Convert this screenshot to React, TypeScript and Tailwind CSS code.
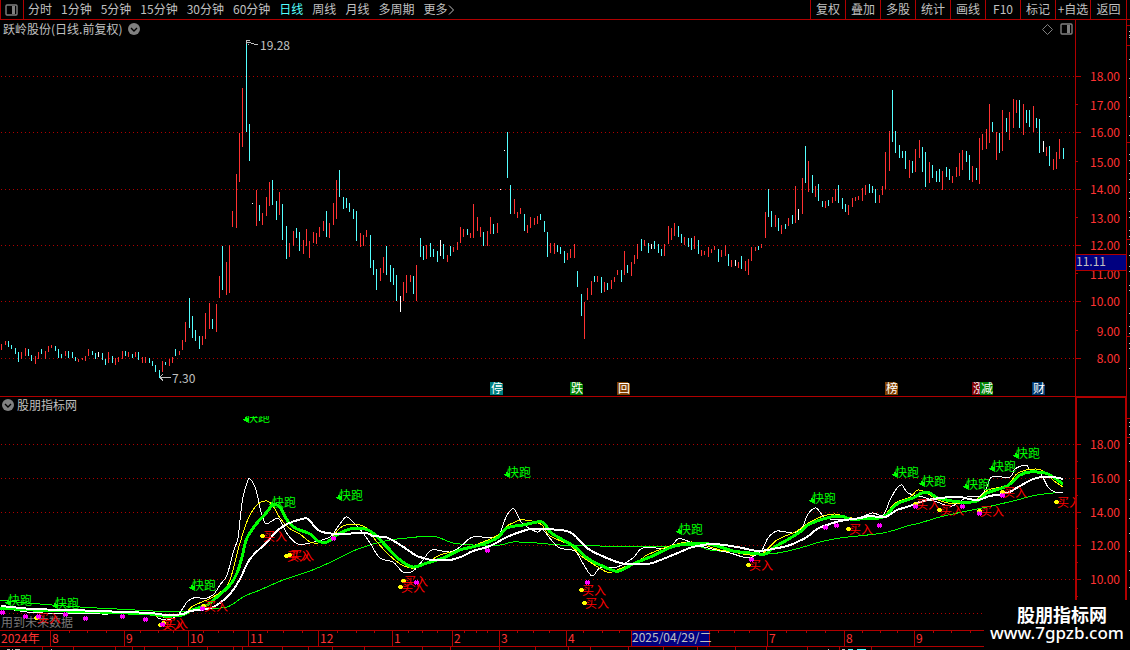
import React from "react";
import clsx from "clsx";

type Bar = [x: number, high: number, low: number, kind: "r" | "c" | "w"];

const RED = "#b00000";
const BAR_COLORS = { r: "#ff3232", c: "#54ffff", w: "#ffffff" };

const bars: Bar[] = [
  [1, 344, 350, "r"], [5, 341, 345, "r"], [8, 341, 347, "c"], [11, 345, 349, "c"], [15, 348, 354, "c"],
  [18, 352, 362, "c"], [21, 352, 359, "r"], [25, 348, 356, "r"], [28, 349, 356, "c"], [31, 355, 361, "c"],
  [35, 356, 364, "r"], [38, 352, 359, "r"], [41, 349, 354, "c"], [45, 351, 359, "r"], [48, 346, 352, "r"],
  [51, 345, 348, "r"], [55, 346, 351, "c"], [58, 349, 358, "c"], [61, 354, 358, "c"], [65, 351, 356, "r"],
  [68, 351, 358, "c"], [72, 352, 358, "c"], [75, 357, 361, "c"], [78, 359, 362, "r"], [82, 358, 360, "r"],
  [85, 356, 361, "r"], [88, 349, 356, "r"], [92, 351, 355, "c"], [95, 353, 359, "c"], [98, 352, 357, "w"],
  [102, 353, 360, "c"], [105, 359, 365, "c"], [108, 352, 363, "r"], [112, 356, 363, "c"], [115, 358, 365, "r"],
  [118, 357, 362, "r"], [122, 351, 359, "r"], [125, 351, 356, "c"], [128, 352, 357, "r"], [132, 354, 358, "c"],
  [135, 352, 357, "r"], [138, 352, 360, "c"], [142, 357, 363, "r"], [145, 357, 363, "r"], [149, 358, 363, "c"],
  [152, 361, 366, "c"], [155, 365, 372, "c"], [159, 370, 378, "c"], [162, 361, 372, "r"], [165, 362, 365, "c"],
  [169, 359, 366, "r"], [172, 357, 363, "r"], [175, 349, 356, "c"], [179, 351, 355, "r"], [182, 340, 350, "r"],
  [185, 322, 342, "r"], [189, 298, 328, "c"], [192, 316, 338, "c"], [195, 330, 341, "c"], [199, 336, 349, "c"],
  [202, 336, 345, "r"], [205, 313, 339, "r"], [209, 303, 329, "r"], [212, 319, 329, "c"], [216, 304, 332, "r"],
  [219, 276, 298, "r"], [222, 246, 290, "c"], [226, 262, 295, "r"], [229, 245, 293, "r"], [232, 211, 227, "r"],
  [236, 174, 228, "r"], [239, 133, 182, "r"], [242, 88, 147, "r"], [246, 40, 132, "c"], [249, 124, 161, "c"],
  [252, 203, 204, "w"], [256, 190, 226, "r"], [259, 205, 221, "c"], [262, 213, 225, "r"], [266, 197, 216, "r"],
  [269, 182, 206, "r"], [272, 180, 205, "c"], [276, 201, 220, "c"], [279, 192, 215, "r"], [282, 204, 240, "c"],
  [286, 226, 259, "c"], [289, 243, 257, "r"], [293, 231, 246, "r"], [296, 228, 238, "c"], [299, 232, 251, "c"],
  [303, 240, 254, "r"], [306, 229, 246, "r"], [309, 241, 258, "r"], [313, 232, 243, "r"], [316, 233, 244, "r"],
  [319, 227, 237, "r"], [323, 221, 231, "r"], [326, 211, 237, "c"], [329, 223, 238, "r"], [333, 203, 225, "r"],
  [336, 180, 219, "r"], [339, 170, 197, "c"], [343, 197, 209, "c"], [346, 198, 208, "c"], [349, 203, 212, "c"],
  [353, 209, 219, "c"], [356, 211, 241, "c"], [360, 233, 247, "r"], [363, 235, 246, "r"], [366, 230, 237, "r"],
  [370, 235, 268, "c"], [373, 260, 275, "c"], [376, 269, 290, "c"], [380, 268, 281, "r"], [383, 257, 273, "r"],
  [386, 246, 275, "c"], [390, 265, 282, "c"], [393, 268, 285, "c"], [396, 275, 301, "c"], [400, 296, 312, "w"],
  [403, 282, 301, "r"], [406, 275, 293, "r"], [410, 275, 282, "r"], [413, 276, 294, "c"], [416, 265, 301, "r"],
  [420, 238, 257, "c"], [423, 246, 260, "c"], [426, 245, 259, "r"], [430, 243, 257, "c"], [433, 249, 257, "c"],
  [437, 251, 262, "c"], [440, 240, 256, "w"], [443, 244, 259, "c"], [447, 255, 262, "r"], [450, 246, 256, "c"],
  [453, 247, 252, "r"], [457, 242, 250, "r"], [460, 227, 243, "r"], [463, 229, 237, "r"], [467, 229, 235, "c"],
  [470, 233, 238, "r"], [473, 204, 238, "r"], [477, 217, 231, "r"], [480, 227, 237, "r"], [483, 232, 246, "c"],
  [487, 231, 246, "r"], [490, 217, 234, "r"], [493, 224, 234, "c"], [497, 223, 233, "r"], [500, 189, 190, "w"],
  [504, 150, 151, "w"], [507, 132, 178, "c"], [510, 185, 214, "c"], [514, 199, 214, "r"], [517, 212, 218, "r"],
  [520, 208, 214, "r"], [524, 214, 231, "c"], [527, 225, 233, "r"], [530, 217, 228, "r"], [534, 218, 225, "r"],
  [537, 216, 224, "r"], [540, 214, 220, "c"], [544, 221, 232, "c"], [547, 232, 257, "c"], [550, 243, 253, "r"],
  [554, 243, 254, "r"], [557, 245, 252, "c"], [560, 247, 254, "c"], [564, 251, 263, "c"], [567, 253, 260, "r"],
  [570, 249, 258, "r"], [574, 244, 258, "r"], [577, 271, 287, "c"], [581, 294, 316, "c"], [584, 302, 339, "r"],
  [587, 288, 300, "r"], [591, 281, 295, "r"], [594, 276, 282, "c"], [597, 276, 282, "r"], [601, 277, 293, "c"],
  [604, 282, 292, "r"], [607, 283, 290, "c"], [611, 280, 289, "r"], [614, 277, 282, "r"], [617, 270, 275, "r"],
  [621, 270, 282, "c"], [624, 251, 275, "r"], [627, 265, 273, "c"], [631, 262, 276, "r"], [634, 255, 264, "r"],
  [637, 244, 259, "r"], [641, 239, 251, "c"], [644, 240, 246, "r"], [648, 243, 253, "c"], [651, 244, 249, "w"],
  [654, 241, 249, "c"], [658, 244, 253, "c"], [661, 249, 256, "c"], [664, 244, 256, "r"], [668, 226, 244, "r"],
  [671, 228, 240, "r"], [674, 223, 236, "r"], [678, 226, 237, "c"], [681, 234, 243, "c"], [684, 237, 245, "r"],
  [688, 238, 247, "c"], [691, 238, 250, "c"], [694, 236, 249, "r"], [698, 240, 254, "c"], [701, 250, 256, "r"],
  [704, 251, 255, "r"], [708, 247, 257, "r"], [711, 249, 253, "r"], [714, 246, 250, "r"], [718, 249, 262, "c"],
  [721, 250, 257, "r"], [725, 245, 256, "r"], [728, 254, 266, "c"], [731, 260, 267, "r"], [735, 260, 266, "w"],
  [738, 262, 268, "r"], [741, 256, 269, "c"], [745, 261, 271, "r"], [748, 259, 275, "r"], [751, 247, 261, "r"],
  [755, 247, 251, "r"], [758, 246, 250, "c"], [761, 244, 248, "r"], [765, 212, 238, "r"], [768, 189, 217, "c"],
  [771, 211, 227, "c"], [775, 215, 227, "r"], [778, 218, 231, "c"], [781, 225, 234, "r"], [785, 224, 229, "c"],
  [788, 218, 226, "r"], [792, 215, 224, "c"], [795, 186, 223, "r"], [798, 209, 220, "w"], [802, 178, 214, "r"],
  [805, 146, 183, "c"], [808, 161, 192, "r"], [812, 175, 193, "c"], [815, 186, 197, "r"], [818, 184, 201, "c"],
  [822, 201, 207, "c"], [825, 201, 208, "r"], [828, 200, 206, "c"], [832, 197, 203, "r"], [835, 189, 201, "r"],
  [838, 185, 203, "c"], [842, 198, 209, "c"], [845, 204, 212, "c"], [848, 205, 215, "r"], [852, 198, 207, "r"],
  [855, 197, 201, "r"], [858, 196, 200, "r"], [862, 188, 201, "r"], [865, 185, 195, "r"], [869, 184, 193, "c"],
  [872, 186, 193, "c"], [875, 189, 203, "c"], [879, 195, 203, "r"], [882, 186, 195, "r"], [885, 152, 189, "r"],
  [889, 131, 171, "r"], [892, 90, 142, "c"], [895, 131, 153, "c"], [899, 145, 158, "c"], [902, 151, 158, "c"],
  [905, 151, 169, "c"], [909, 160, 178, "r"], [912, 161, 173, "c"], [915, 149, 172, "r"], [919, 140, 158, "r"],
  [922, 147, 172, "c"], [925, 152, 187, "c"], [929, 162, 183, "r"], [932, 165, 178, "c"], [936, 171, 182, "c"],
  [939, 169, 182, "c"], [942, 171, 190, "r"], [946, 167, 177, "c"], [949, 169, 180, "c"], [952, 176, 183, "r"],
  [956, 167, 177, "r"], [959, 153, 176, "r"], [962, 150, 170, "r"], [966, 151, 162, "c"], [969, 155, 180, "c"],
  [972, 166, 182, "r"], [976, 168, 180, "c"], [979, 138, 184, "r"], [982, 134, 150, "r"], [986, 129, 149, "r"],
  [989, 104, 143, "r"], [992, 122, 132, "c"], [996, 132, 160, "r"], [999, 133, 153, "c"], [1002, 110, 151, "r"],
  [1006, 118, 132, "c"], [1009, 112, 140, "r"], [1013, 99, 128, "r"], [1016, 100, 113, "r"], [1019, 100, 128, "c"],
  [1023, 104, 135, "r"], [1026, 110, 123, "c"], [1029, 110, 127, "c"], [1033, 106, 132, "r"], [1036, 118, 128, "c"],
  [1039, 119, 153, "c"], [1043, 141, 152, "w"], [1046, 147, 156, "r"], [1049, 146, 166, "c"], [1053, 159, 170, "r"],
  [1056, 152, 169, "r"], [1059, 139, 159, "r"], [1063, 148, 159, "c"],
];

const priceTicks: [number, string][] = [
  [76, "18.00"], [104, "17.00"], [132, "16.00"], [161, "15.00"], [189, "14.00"], [217, "13.00"],
  [245, "12.00"], [273, "11.00"], [301, "10.00"], [330, "9.00"], [358, "8.00"],
];

const indicatorTicks: [number, string][] = [
  [444, "18.00"], [461, ""], [478, "16.00"], [495, ""], [512, "14.00"], [528, ""],
  [545, "12.00"], [562, ""], [579, "10.00"], [596, ""],
];

const events = [
  { x: 490, label: "停", color: "#008080" },
  { x: 570, label: "跌", color: "#008000" },
  { x: 617, label: "回", color: "#804000" },
  { x: 885, label: "榜", color: "#804000" },
  { x: 972, label: "涨", color: "#800000" },
  { x: 980, label: "减", color: "#008000" },
  { x: 1032, label: "财", color: "#003870" },
];

const thinGreen =
  "0,600 27,603 80,607 117,609 180,612 207,609 227,607 240,599 247,595 260,590 283,580 310,571 333,561 353,551 373,544 390,540 407,538 430,536 440,538 453,543 473,545 500,545 513,542 537,543 560,545 600,546 633,547 673,546 697,546 710,550 733,552 767,554 783,552 800,548 820,542 840,538 883,533 907,526 920,523 940,517 967,511 987,507 1013,501 1037,495 1063,492";
const thinWhite =
  "0,608 14,610 27,612 43,613 100,614 150,614 158,618 167,620 177,616 183,608 188,601 197,597 203,599 213,595 220,585 227,575 233,553 238,538 240,520 243,497 247,483 250,479 256,490 260,508 263,518 266,524 272,521 279,519 288,535 298,544 310,543 330,537 337,528 346,517 353,522 363,533 370,543 380,558 393,562 403,572 413,571 423,560 432,550 450,552 460,547 473,537 497,538 501,531 507,515 514,509 522,523 537,532 543,530 558,547 575,551 582,562 592,576 600,568 617,567 633,558 643,548 667,548 678,539 685,540 700,546 730,553 743,557 752,557 762,550 768,538 777,531 793,533 802,528 808,514 816,508 823,516 830,519 857,518 872,513 883,515 890,500 897,488 902,485 908,493 923,497 937,502 952,506 967,497 980,496 987,487 992,477 1010,477 1015,469 1026,465 1030,470 1040,473 1048,487 1055,492 1063,492";
const yellow =
  "0,608 60,611 140,614 163,617 182,616 187,612 193,606 213,597 227,586 233,570 238,550 245,527 250,515 258,504 267,501 273,506 280,518 289,528 300,534 310,542 318,543 330,540 340,528 352,524 367,528 373,537 387,553 400,564 407,567 415,568 427,563 440,555 460,550 483,542 500,534 507,526 513,523 520,520 532,521 542,525 550,536 570,545 580,555 590,562 607,572 617,570 640,560 647,555 673,545 692,542 707,546 720,550 733,552 750,555 763,553 777,540 797,531 810,522 823,516 835,514 847,517 860,519 883,516 895,503 910,497 918,490 927,493 938,500 957,504 977,499 988,490 1007,485 1018,473 1035,469 1045,472 1053,480 1063,487";
const thickGreen =
  "0,608 33,610 100,612 150,614 163,616 182,615 192,610 207,605 217,597 230,585 237,573 242,557 247,538 257,523 267,512 273,505 280,507 287,520 295,528 310,534 318,541 327,542 337,535 350,529 365,529 373,533 387,547 400,560 413,567 427,563 443,558 460,550 480,545 497,538 507,528 523,525 542,522 550,532 563,540 575,547 587,558 600,565 615,571 622,570 633,564 650,557 663,551 675,546 700,543 717,546 733,551 750,553 765,554 773,548 787,540 800,532 808,525 823,519 840,516 850,519 860,519 883,517 897,504 913,498 922,493 930,493 938,498 960,502 977,501 987,493 1007,486 1020,475 1030,472 1045,473 1053,477 1063,484";
const thickWhite =
  "1,606 33,609 70,610 100,611 123,612 150,613 167,615 183,614 190,611 207,609 217,605 230,594 240,579 250,559 267,542 277,531 287,524 302,519 308,519 318,530 327,533 340,534 365,533 373,536 385,537 392,540 405,548 415,555 423,558 433,560 450,560 463,556 473,551 490,546 507,537 523,531 533,529 560,530 573,534 587,548 600,555 617,562 627,564 648,564 663,559 680,552 693,547 713,544 737,547 757,551 767,550 787,546 797,542 807,537 817,529 827,525 840,521 860,518 870,516 885,517 897,510 907,507 920,502 933,499 950,497 960,497 977,500 990,496 1007,493 1020,486 1033,479 1043,477 1053,477 1063,479";

// x of the first glyph, vertical centre of the label
const sellMarks: [number, number][] = [
  [8, 600], [55, 603], [192, 585], [272, 502], [246, 417], [339, 495], [507, 472], [679, 529],
  [812, 498], [895, 472], [922, 481], [966, 484], [992, 466], [1016, 453],
];

const buyMarks: [number, number][] = [
  [36, 618], [160, 625], [163, 623], [203, 606], [262, 536], [286, 556], [289, 555], [403, 581], [400, 587],
  [581, 590], [584, 603], [748, 565], [848, 529], [915, 504], [939, 510], [979, 511], [1002, 492], [1056, 502],
];

const pinkDots: [number, number][] = [
  [2, 612], [25, 616], [38, 616], [65, 614], [85, 618], [122, 616], [145, 619], [162, 624], [202, 608],
  [333, 538], [416, 582], [487, 550], [587, 582], [751, 559], [825, 527], [836, 525], [879, 525],
  [915, 506], [962, 506], [979, 513], [1002, 495],
];

const months: [number, string][] = [
  [50, "8"], [124, "9"], [188, "10"], [248, "11"], [318, "12"], [392, "1"], [452, "2"],
  [499, "3"], [566, "4"], [767, "7"], [844, "8"], [914, "9"],
];

const weekTicks = [
  69, 87, 106, 140, 158, 173, 203, 218, 233, 267, 283, 302, 337, 356, 374, 408, 422, 437, 464, 476, 487,
  517, 533, 549, 583, 602, 619, 718, 734, 749, 786, 806, 825, 862, 880, 897, 933, 951, 970,
];

const footTicks = [
  42, 73, 115, 132, 144, 177, 207, 233, 242, 282, 308, 332, 364, 422, 450, 499, 535, 568, 590, 628, 663, 697,
  735, 766, 807, 839, 871,
];

const periods = ["分时", "1分钟", "5分钟", "15分钟", "30分钟", "60分钟", "日线", "周线", "月线", "多周期", "更多"];
const tools = ["复权", "叠加", "多股", "统计", "画线", "F10", "标记", "+自选", "返回"];

// Catmull-Rom spline through the points
function smooth(points: string) {
  const p = points.split(" ").map((s) => s.split(",").map(Number));
  let d = `M${p[0][0]} ${p[0][1]}`;
  for (let i = 0; i < p.length - 1; i++) {
    const a = p[i - 1] ?? p[i];
    const b = p[i];
    const c = p[i + 1];
    const e = p[i + 2] ?? c;
    d += ` C${b[0] + (c[0] - a[0]) / 6} ${b[1] + (c[1] - a[1]) / 6} ${c[0] - (e[0] - b[0]) / 6} ${c[1] - (e[1] - b[1]) / 6} ${c[0]} ${c[1]}`;
  }
  return d;
}

const PanelIcon: React.FC = () => (
  <svg width="13" height="12" viewBox="0 0 13 12" aria-hidden="true">
    <rect x="1" y="1" width="11" height="10" rx="1" fill="none" stroke="#808080" strokeWidth="1.4" />
    <rect x="7" y="2" width="3" height="8" fill="#808080" />
  </svg>
);

const ChevronBadge: React.FC = () => (
  <svg width="12" height="12" viewBox="0 0 12 12" aria-hidden="true">
    <circle cx="6" cy="6" r="6" fill="#808080" />
    <path d="M3 5 L6 8 L9 5" fill="none" stroke="#000" strokeWidth="1.4" />
  </svg>
);

const Toolbar: React.FC = () => (
  <header className="flex h-5 justify-between border-b border-[#b00000] pr-[3px]">
    <nav className="flex items-center gap-[9px]">
      <button className="mr-[-5px] flex h-full w-6 items-center justify-center border-x border-[#b00000] pr-0.5" aria-label="侧栏">
        <PanelIcon />
      </button>
      {periods.map((p) => (
        <button key={p} className={clsx("whitespace-nowrap pb-0.5 leading-4", p === "日线" && "text-[#54ffff]")}>
          {p}
        </button>
      ))}
      <svg className="-ml-2" width="7" height="10" viewBox="0 0 7 10" aria-hidden="true">
        <path d="M1 0.5 L5.5 5 L1 9.5" fill="none" stroke="#c0c0c0" />
      </svg>
    </nav>
    <div className="flex border-r border-[#b00000]">
      {tools.map((t) => (
        <button key={t} className="w-[35px] whitespace-nowrap border-l border-[#b00000] pb-0.5 text-center leading-4 last:w-9">
          {t}
        </button>
      ))}
    </div>
  </header>
);

const GridLines: React.FC<{ rows: number[] }> = ({ rows }) => (
  <g stroke={RED} strokeDasharray="1 3">
    {rows.map((y) => (
      <line key={y} x1="1" x2="1075" y1={y + 0.5} y2={y + 0.5} />
    ))}
  </g>
);

const PriceScale: React.FC<{ ticks: [number, string][] }> = ({ ticks }) => (
  <g fill="#ff3232">
    {ticks.map(([y, label], i) => {
      const major = i % 2 === 0;
      return (
        <React.Fragment key={y}>
          <rect x="1076" y={y} width={major ? 5 : 2} height="1" fill={RED} />
          <text x="1120" y={major ? y + 5 : y + 6} textAnchor="end">
            {label}
          </text>
        </React.Fragment>
      );
    })}
  </g>
);

// sliver of the neighbouring quote panel
const EdgeStrip: React.FC<{ lines: number[]; marks: number[] }> = ({ lines, marks }) => (
  <g>
    {lines.map((y) => (
      <rect key={y} x="1127" y={y} width="3" height="1" fill={RED} />
    ))}
    {marks.map((y) => (
      <rect key={y} x="1129" y={y} width="1" height="1" fill="#c0c0c0" />
    ))}
  </g>
);

const PriceChart: React.FC = () => (
  <svg className="block w-full" viewBox="0 20 1130 377" shapeRendering="crispEdges" role="img" aria-label="日线">
    <GridLines rows={[76, 132, 189, 245, 301, 358]} />
    {bars.map(([x, high, low, kind]) => (
      <rect key={x} x={x} y={high} width="1" height={low - high} fill={BAR_COLORS[kind]} />
    ))}

    <g stroke="#c0c0c0" fill="none">
      <path d="M247 40.5 H250 M246.5 40 V44 M247 42 L258 45 M248 44.5 H249" />
      <path d="M160 377.5 H171 M163 374 L160 377 L163 381" />
    </g>
    <text x="260" y="50">19.28</text>
    <text x="172" y="383">7.30</text>

    {events.map(({ x, label, color }) => (
      <g key={x}>
        <path d={`M${x} 382 H${x + 11} V383 H${x + 12} V384 H${x + 13} V395 H${x} Z`} fill={color} />
        <text x={x + 1} y="393" fill="#fff">
          {label}
        </text>
      </g>
    ))}

    <PriceScale ticks={priceTicks} />
    <rect x="1076" y="254" width="50" height="17" fill={RED} />
    <rect x="1076" y="255" width="50" height="15" fill="#000080" />
    <text x="1076" y="266">11.11</text>

    <g fill={RED}>
      <rect x="1075" y="20" width="1" height="377" />
      <rect x="1126" y="20" width="1" height="377" />
      <rect x="0" y="396" width="1127" height="1" />
    </g>
    <EdgeStrip
      lines={[25, 45, 142, 239, 336]}
      marks={[31, 35, 37, 59, 78, 97, 116, 135, 154, 160, 173, 179, 192, 198, 211, 217, 230, 236, 244, 255, 266, 271, 285, 290, 313, 326, 333, 343, 348, 368]}
    />
  </svg>
);

const IndicatorChart: React.FC = () => (
  <svg className="block w-full" viewBox="0 397 1130 253" shapeRendering="crispEdges" role="img" aria-label="股朋指标网">
    <clipPath id="plot">
      <rect x="0" y="416" width="1075" height="214" />
    </clipPath>
    <GridLines rows={[444, 478, 512, 545, 579, 613]} />

    <g clipPath="url(#plot)">
      <text x="1" y="627" fill="#787878">用到未来数据</text>
      <g fill="none" strokeLinejoin="round">
        <path d={smooth(thinGreen)} stroke="#00ff00" />
        <path d={smooth(thinWhite)} stroke="#fff" />
        <path d={smooth(yellow)} stroke="#ffff00" />
        <path d={smooth(thickGreen)} stroke="#00ff00" strokeWidth="3" />
        <path d={smooth(thickWhite)} stroke="#fff" strokeWidth="2" />
      </g>
      {sellMarks.map(([x, y]) => (
        <g key={x} fill="#00ff00">
          <path d={`M${x - 1} ${y} h2 v1 h2 v3 h-1 v1 h-2 v-1 h-2 v-1 h-1 v-1 h2 Z`} />
          <text x={x} y={y + 5}>快跑</text>
        </g>
      ))}
      {buyMarks.map(([x, y]) => (
        <g key={x}>
          <text x={x + 1} y={y + 5} fill="#ff0000">买入</text>
          <path d={`M${x - 1} ${y - 2} h3 v1 h1 v2 h-1 v1 h-3 v-1 h-1 v-2 h1 Z`} fill="#ffff00" />
        </g>
      ))}
      {pinkDots.map(([x, y]) => (
        <path
          key={x}
          d={`M${x - 1} ${y - 2} h1 v1 h1 v-1 h1 v1 h1 v3 h-1 v1 h-1 v-1 h-1 v1 h-1 v-1 h-1 v-3 h1 Z`}
          fill="#ff00ff"
        />
      ))}
    </g>

    <g fill={RED}>
      <rect x="0" y="630" width="1076" height="1" />
      <rect x="0" y="646" width="1127" height="1" />
      {months.map(([x]) => (
        <rect key={x} x={x} y="631" width="1" height="15" />
      ))}
      {weekTicks.map((x) => (
        <rect key={x} x={x} y="631" width="1" height="2" />
      ))}
      {footTicks.map((x) => (
        <rect key={x} x={x} y="647" width="1" height="3" />
      ))}
      <rect x="631" y="631" width="79" height="15" />
    </g>
    <rect x="632" y="631" width="77" height="15" fill="#000080" />
    <text x="632" y="642">2025/04/29/二</text>
    <g fill="#ff3232">
      <text x="1" y="643">2024年</text>
      {months.map(([x, label]) => (
        <text key={x} x={x + 2} y="643">
          {label}
        </text>
      ))}
    </g>
    <path d="M7 649.5 H10 M12 649.5 H13 M15 649.5 H20 M51 649.5 H52 M828 649.5 H829 M842 649.5 H845" stroke="#c0c0c0" />
    <path d="M848 649.5 H853 M857 649.5 H866" stroke="#54ffff" />

    <PriceScale ticks={indicatorTicks} />
    <g fill={RED}>
      <rect x="1075" y="396" width="2" height="254" />
      <rect x="1125" y="396" width="2" height="254" />
      <rect x="1075" y="397" width="52" height="1" />
    </g>
    <EdgeStrip lines={[418, 437]} marks={[422, 426, 434, 443, 461, 480, 499, 518, 533, 551, 570, 587]} />
  </svg>
);

const App: React.FC = () => {
  return (
    <main className="relative w-full overflow-hidden bg-black fill-[#c0c0c0] font-['Noto_Sans_CJK_SC','Liberation_Sans',sans-serif] text-xs text-[#c0c0c0]">
      <Toolbar />

      <section className="relative">
        <PriceChart />
        <div className="absolute inset-x-0 top-0 flex h-[18px] items-center justify-between pl-[3px] pr-[57px]">
          <h1 className="flex items-center gap-1.5">
            跃岭股份(日线.前复权)
            <ChevronBadge />
          </h1>
          <div className="flex items-center gap-[7px]">
            <svg width="11" height="11" viewBox="0 0 11 11" aria-hidden="true">
              <path d="M5.5 0.5 L10.5 5.5 L5.5 10.5 L0.5 5.5 Z" fill="none" stroke="#808080" />
            </svg>
            <PanelIcon />
          </div>
        </div>
      </section>

      <section className="relative">
        <IndicatorChart />
        <h2 className="absolute left-0.5 top-0 flex h-4 items-center gap-[3px]">
          <ChevronBadge />
          股朋指标网
        </h2>
      </section>

      <footer className="absolute bottom-0 right-0 flex h-[50px] w-[146px] flex-col items-center bg-black pt-1 text-white">
        <p className="pl-2.5 text-lg font-bold leading-5">股朋指标网</p>
        <p className="font-['Noto_Sans',sans-serif] text-[17px] font-medium leading-[18px]">www.7gpzb.com</p>
      </footer>
    </main>
  );
};

export default App;
